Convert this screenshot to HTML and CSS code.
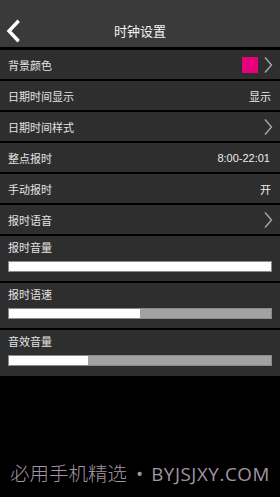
FILE: index.html
```html
<!DOCTYPE html>
<html lang="zh">
<head>
<meta charset="utf-8">
<title>时钟设置</title>
<link rel="stylesheet" href="styles.css">
</head>
<body>
<div class="screen">
  <header class="header">
    <svg class="back" width="16" height="24" viewBox="0 0 16 24"><polyline points="12.5,3 4,12 12.5,21" fill="none" stroke="#fff" stroke-width="3.4" stroke-linecap="square" stroke-linejoin="miter"/></svg>
    <div class="title">时钟设置</div>
  </header>
  <main class="list">
    <div class="row"><span class="label">背景颜色</span><span class="right"><span class="swatch"></span><svg class="chev" width="10" height="18" viewBox="0 0 10 18"><polyline points="2,1.5 8.5,9 2,16.5" fill="none" stroke="#a8a8a8" stroke-width="1.4"/></svg></span></div>
    <div class="row"><span class="label">日期时间显示</span><span class="value">显示</span></div>
    <div class="row"><span class="label">日期时间样式</span><span class="right"><svg class="chev" width="10" height="18" viewBox="0 0 10 18"><polyline points="2,1.5 8.5,9 2,16.5" fill="none" stroke="#a8a8a8" stroke-width="1.4"/></svg></span></div>
    <div class="row"><span class="label">整点报时</span><span class="value num">8:00-22:01</span></div>
    <div class="row"><span class="label">手动报时</span><span class="value">开</span></div>
    <div class="row"><span class="label">报时语音</span><span class="right"><svg class="chev" width="10" height="18" viewBox="0 0 10 18"><polyline points="2,1.5 8.5,9 2,16.5" fill="none" stroke="#a8a8a8" stroke-width="1.4"/></svg></span></div>
    <div class="slider-row"><div class="label">报时音量</div><div class="bar"><div class="fill" style="width:100%"></div></div></div>
    <div class="slider-row"><div class="label">报时语速</div><div class="bar"><div class="fill" style="width:50%"></div></div></div>
    <div class="slider-row last"><div class="label">音效音量</div><div class="bar"><div class="fill" style="width:30%"></div></div></div>
  </main>
  <footer class="footer"><span class="cjk">必用手机精选</span><span class="dot">•</span><span class="latin">BYJSJXY.COM</span></footer>
</div>
</body>
</html>
```
FILE: styles.css
```css
* { box-sizing: border-box; }
html, body { margin: 0; padding: 0; background: #000; }
body {
  width: 280px;
  height: 497px;
  overflow: hidden;
  font-family: "Noto Sans CJK SC", "Noto Sans", sans-serif;
  color: #e6e6e6;
}
.screen { display: flex; flex-direction: column; height: 497px; }
.header {
  height: 47px;
  background: #3a3a3a;
  padding-top: 14px;
  position: relative;
  display: flex;
  align-items: center;
  justify-content: center;
}
.back { position: absolute; left: 5px; top: 19px; }
.title { font-size: 13px; color: #f4f4f4; line-height: 20px; }
.list {
  margin-top: 3px;
  display: flex;
  flex-direction: column;
  gap: 2px;
}
.row {
  height: 29px;
  background: #2e2e2e;
  display: flex;
  align-items: center;
  justify-content: space-between;
  padding: 0 8px;
}
.label { font-size: 11px; line-height: 16px; color: #e4e4e4; }
.value { font-size: 11px; line-height: 16px; color: #ececec; margin-right: 1px; }
.value.num { font-family: "Liberation Sans", Arial, sans-serif; font-size: 11px; margin-right: 2px; }
.right { display: flex; align-items: center; gap: 5px; margin-right: -1px; }
.swatch { width: 16px; height: 16px; background: #e8007a; display: block; }
.chev { display: block; }
.slider-row {
  height: 45px;
  background: #2e2e2e;
  padding: 0 8px;
}
.slider-row.last { height: 46px; }
.slider-row .label { line-height: 20px; padding-top: 1px; }
.bar {
  margin-top: 4px;
  height: 11px;
  background: #a2a2a2;
  border: 1px solid #8a8a8a;
}
.fill { height: 100%; background: #fff; }
.footer {
  margin-top: 84px;
  padding-left: 10px;
  font-size: 19.5px;
  font-weight: 300;
  line-height: 26px;
  color: #a395a4;
  white-space: nowrap;
  display: flex;
  align-items: baseline;
}
.footer .dot { font-family: "Open Sans", sans-serif; font-size: 19px; font-weight: 400; margin: 0 8px 0 9px; }
.footer .latin { font-family: "Open Sans", "Noto Sans", sans-serif; font-size: 18.7px; font-weight: 400; letter-spacing: 0.6px; }
```
